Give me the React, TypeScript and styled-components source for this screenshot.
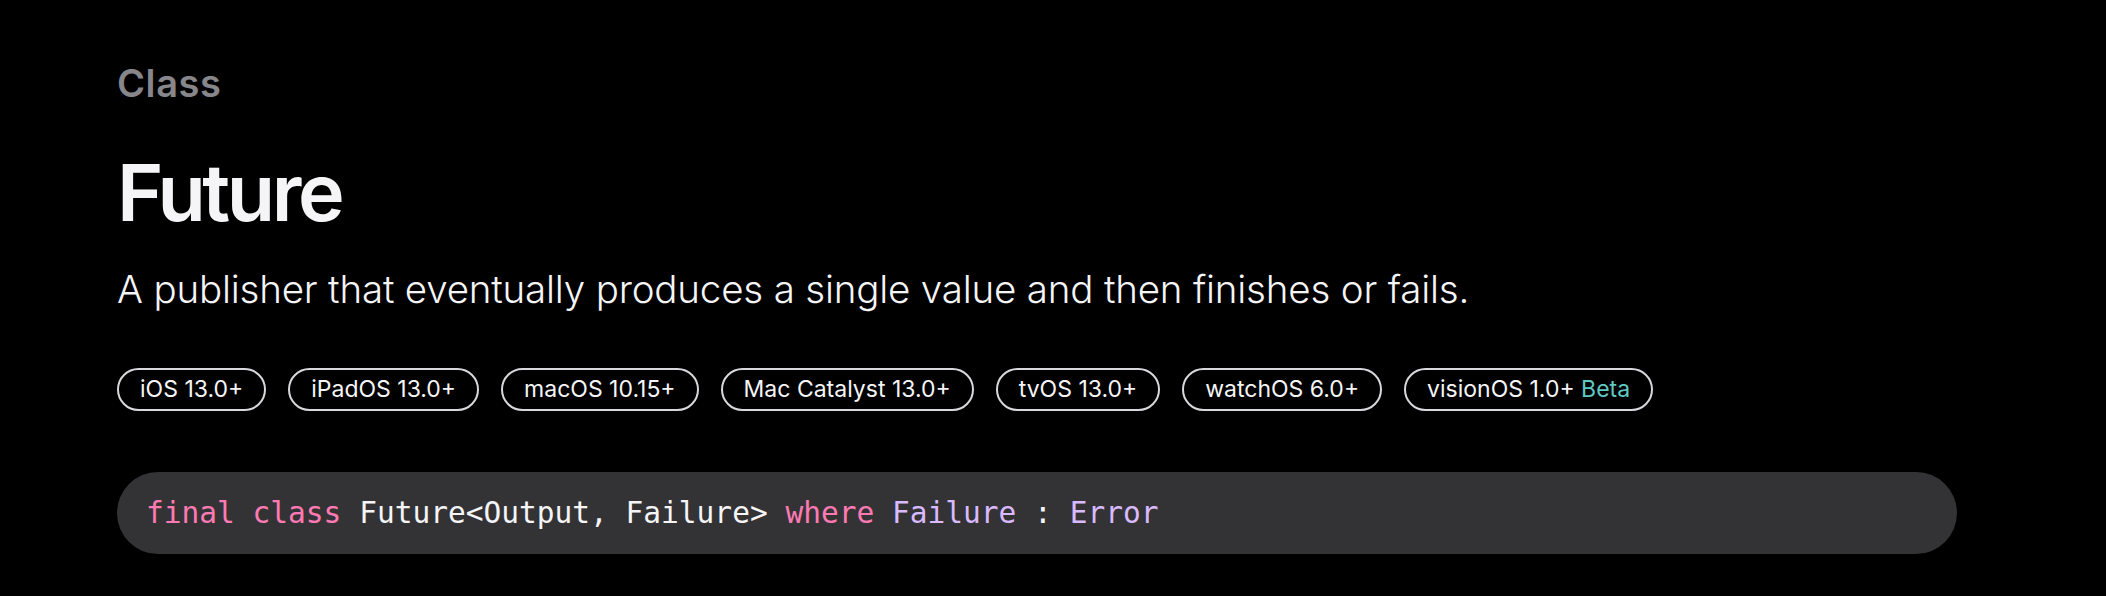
import React from "react";
import styled, { createGlobalStyle } from "styled-components";

const GlobalStyle = createGlobalStyle`
  html, body {
    margin: 0;
    padding: 0;
    background: #000;
  }
  body {
    font-family: Inter, "Noto Sans", "Liberation Sans", sans-serif;
    color: #f5f5f7;
    -webkit-font-smoothing: antialiased;
  }
`;

const Page = styled.main`
  padding: 60px 0 0 117px;
  width: 1840px;
`;

const Eyebrow = styled.div`
  font-size: 38px;
  line-height: 46px;
  font-weight: 600;
  color: #86868b;
  letter-spacing: 0.6px;
`;

const Title = styled.h1`
  margin: 41px 0 0;
  font-size: 79px;
  line-height: 90px;
  font-weight: 600;
  letter-spacing: -3.4px;
  color: #f5f5f7;
`;

const Abstract = styled.p`
  margin: 28px 0 0;
  font-size: 38.5px;
  line-height: 48px;
  font-weight: 300;
  letter-spacing: -0.18px;
  color: #f5f5f7;
`;

const Availability = styled.ul`
  display: flex;
  gap: 22px;
  margin: 55px 0 0;
  padding: 0;
  list-style: none;
`;

const Pill = styled.li`
  border: 2px solid #d8d8dc;
  border-radius: 22px;
  padding: 0 21px;
  font-size: 23px;
  line-height: 39px;
  color: #f5f5f7;
  white-space: nowrap;
`;

const Beta = styled.span`
  color: #5fc9c2;
`;

const Declaration = styled.pre`
  display: flex;
  align-items: center;
  height: 82px;
  margin: 61px 0 0;
  padding: 0 29px;
  border-radius: 41px;
  background: #333336;
  font-family: "DejaVu Sans Mono", "Liberation Mono", monospace;
  font-size: 29.5px;
  color: #f5f5f7;
`;

const Code = styled.code`
  font: inherit;
  white-space: pre;
`;

const Token = styled.span<{ $kind?: "keyword" | "type" }>`
  color: ${(p) =>
    p.$kind === "keyword" ? "#ff7ab2" : p.$kind === "type" ? "#dabaff" : "#f5f5f7"};
`;

const platforms = [
  "iOS 13.0+",
  "iPadOS 13.0+",
  "macOS 10.15+",
  "Mac Catalyst 13.0+",
  "tvOS 13.0+",
  "watchOS 6.0+",
];

export default function App() {
  return (
    <>
      <GlobalStyle />
      <Page>
        <Eyebrow>Class</Eyebrow>
        <Title>Future</Title>
        <Abstract>
          A publisher that eventually produces a single value and then finishes or fails.
        </Abstract>
        <Availability>
          {platforms.map((p) => (
            <Pill key={p}>{p}</Pill>
          ))}
          <Pill>
            visionOS 1.0+ <Beta>Beta</Beta>
          </Pill>
        </Availability>
        <Declaration>
          <Code>
            <Token $kind="keyword">final</Token> <Token $kind="keyword">class</Token>{" "}
            <Token>Future&lt;Output, Failure&gt;</Token> <Token $kind="keyword">where</Token>{" "}
            <Token $kind="type">Failure</Token> : <Token $kind="type">Error</Token>
          </Code>
        </Declaration>
      </Page>
    </>
  );
}
